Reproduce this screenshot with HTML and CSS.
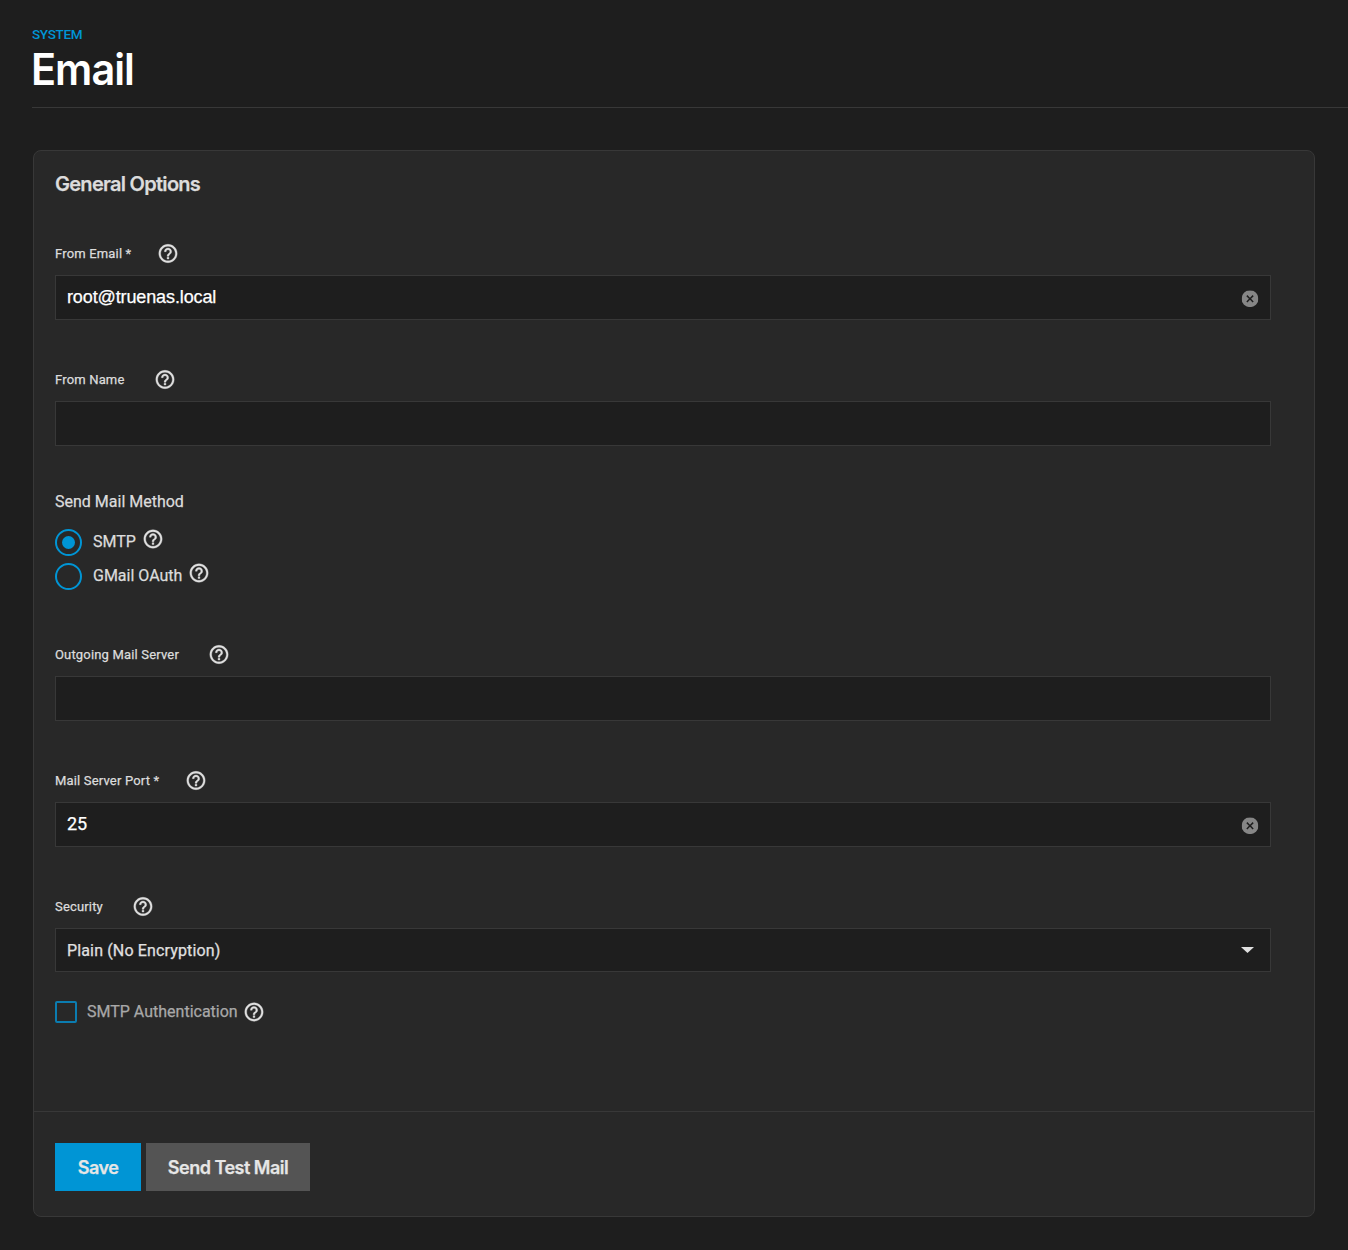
FILE: index.html
```html
<!DOCTYPE html>
<html lang="en">
<head>
<meta charset="utf-8">
<title>Email</title>
<link rel="stylesheet" href="styles.css">
</head>
<body>
<svg class="defs" width="0" height="0" aria-hidden="true">
  <symbol id="help" viewBox="0 0 24 24"><path d="M11 18h2v-2h-2v2zm1-16C6.480 2 2 6.480 2 12s4.480 10 10 10 10-4.480 10-10S17.520 2 12 2zm0 18c-4.410 0-8-3.590-8-8s3.590-8 8-8 8 3.590 8 8-3.590 8-8 8zm0-14c-2.210 0-4 1.790-4 4h2c0-1.100.9-2 2-2s2 .9 2 2c0 2-3 1.750-3 5h2c0-2.250 3-2.500 3-5 0-2.210-1.790-4-4-4z"/></symbol>
  <symbol id="clear" viewBox="0 0 24 24"><path d="M12 0a12 12 0 1 0 0 24 12 12 0 0 0 0-24zm5.200 15.700-1.500 1.500L12 13.500l-3.700 3.700-1.500-1.500 3.700-3.700-3.700-3.700 1.500-1.500 3.700 3.700 3.700-3.700 1.500 1.500-3.700 3.700z"/></symbol>
</svg>
<header class="page-header">
  <div class="crumb">SYSTEM</div>
  <h1>Email</h1>
</header>
<main class="card">
  <section class="content">
    <h2>General Options</h2>
    <div class="field first">
      <div class="label required"><span>From Email *</span><svg class="help"><use href="#help"/></svg></div>
      <div class="box"><span class="value arial">root@truenas.local</span><svg class="clear"><use href="#clear"/></svg></div>
    </div>
    <div class="field">
      <div class="label"><span>From Name</span><svg class="help"><use href="#help"/></svg></div>
      <div class="box"></div>
    </div>
    <div class="method">
      <div class="method-title">Send Mail Method</div>
      <div class="option"><span class="radio on"></span><span class="option-text">SMTP</span><svg class="help"><use href="#help"/></svg></div>
      <div class="option"><span class="radio"></span><span class="option-text">GMail OAuth</span><svg class="help"><use href="#help"/></svg></div>
    </div>
    <div class="field server">
      <div class="label"><span>Outgoing Mail Server</span><svg class="help"><use href="#help"/></svg></div>
      <div class="box"></div>
    </div>
    <div class="field">
      <div class="label required"><span>Mail Server Port *</span><svg class="help"><use href="#help"/></svg></div>
      <div class="box"><span class="value">25</span><svg class="clear"><use href="#clear"/></svg></div>
    </div>
    <div class="field">
      <div class="label"><span>Security</span><svg class="help"><use href="#help"/></svg></div>
      <div class="box select"><span class="value choice">Plain (No Encryption)</span><span class="arrow"></span></div>
    </div>
    <div class="auth"><span class="check"></span><span class="auth-text">SMTP Authentication</span><svg class="help"><use href="#help"/></svg></div>
  </section>
  <footer class="actions">
    <button class="save">Save</button>
    <button class="test">Send Test Mail</button>
  </footer>
</main>
</body>
</html>
```

FILE: styles.css
```css
* { box-sizing: border-box; }
body {
  margin: 0;
  height: 1250px;
  overflow: hidden;
  background: #1e1e1e;
  color: #dcdcdc;
  font-family: Roboto, "Liberation Sans", sans-serif;
}
h1, h2 { margin: 0; }
svg { display: block; flex: none; fill: currentColor; }
.defs { position: absolute; }

.page-header {
  height: 108px;
  margin-left: 32px;
  padding-top: 25px;
  border-bottom: 1px solid #383838;
}
.crumb {
  height: 17px;
  line-height: 18px;
  color: #0095d5;
  font-size: 13.5px;
  font-weight: 500;
  letter-spacing: -0.3px;
}
h1 {
  width: max-content;
  height: 54px;
  line-height: 55px;
  color: #fff;
  font-family: Inter, sans-serif;
  font-size: 44px;
  font-weight: 600;
  letter-spacing: -1px;
  transform: translateX(-1px) scaleX(0.94);
  transform-origin: left;
}

.card {
  width: 1282px;
  height: 1067px;
  margin: 42px 0 0 33px;
  border: 1px solid #383838;
  border-radius: 8px;
  background: #282828;
}
.content {
  height: 960px;
  padding: 21px 43px 0 21px;
  -webkit-text-stroke: 0.25px currentColor;
}
h2 {
  height: 24px;
  line-height: 25px;
  font-family: Inter, sans-serif;
  font-size: 20px;
  font-weight: 600;
  letter-spacing: -0.72px;
}
.field { margin-top: 49px; }
.field.first { margin-top: 47px; }
.field.server { margin-top: 55px; }
.label {
  display: flex;
  align-items: center;
  gap: 29px;
  height: 21px;
  font-size: 13px;
  letter-spacing: 0.17px;
}
.label.required { gap: 26px; }
.label .help { transform: translateY(-0.5px); }
.help {
  width: 22px;
  height: 22px;
  color: #e0e0e0;
  stroke: currentColor;
  stroke-width: 0.4px;
}
.box {
  display: flex;
  align-items: center;
  justify-content: space-between;
  height: 45px;
  margin-top: 11px;
  padding: 0 12px 0 11px;
  border: 1px solid #383838;
  background: #1e1e1e;
}
.box.select { height: 44px; }
.value { margin-bottom: 2px; line-height: 24px; color: #fff; font-size: 18px; }
.arial { font-family: "Liberation Sans", sans-serif; letter-spacing: -0.12px; }
.choice { margin: 2px 0 0; color: #e0e0e0; font-size: 16px; letter-spacing: 0.14px; }
.clear {
  width: 17px;
  height: 17px;
  margin-top: 2px;
  color: #868686;
  transform: translate(0.5px, 0.3px);
}
.arrow {
  width: 13px;
  height: 6px;
  margin-right: 4px;
  background: #e0e0e0;
  clip-path: polygon(0 0, 100% 0, 50% 100%);
}

.method { padding-top: 46px; height: 143px; font-size: 16px; }
.method-title { height: 20px; line-height: 20px; margin-bottom: 17px; }
.option { display: flex; align-items: center; height: 27px; margin-bottom: 7px; }
.radio {
  display: flex;
  width: 27px;
  height: 27px;
  margin-right: 11px;
  border: 2px solid #0095d5;
  border-radius: 50%;
}
.radio.on::after {
  content: "";
  width: 13px;
  height: 13px;
  margin: auto;
  border-radius: 50%;
  background: #0095d5;
}
.option-text { margin: 0 6px 2px 0; }
.option .help { margin-bottom: 7px; }
.option:last-child .help { margin-bottom: 8px; }

.auth { display: flex; align-items: center; height: 22px; margin-top: 29px; }
.check { width: 22px; height: 22px; border: 2px solid #0b7cb0; border-radius: 2px; }
.auth-text { margin: 0 5px 1px 10px; color: #a8a8a8; font-size: 16px; }

.actions {
  display: flex;
  gap: 5px;
  padding: 31px 21px 0;
  border-top: 1px solid #383838;
}
button {
  height: 48px;
  padding: 0;
  border: 0;
  color: #e6e6e6;
  font-family: Inter, sans-serif;
  font-size: 18px;
  font-weight: 600;
  letter-spacing: -0.5px;
  -webkit-text-stroke: 0.25px currentColor;
}
.save { width: 86px; background: #0095d5; }
.test { width: 164px; background: #545454; }
```
